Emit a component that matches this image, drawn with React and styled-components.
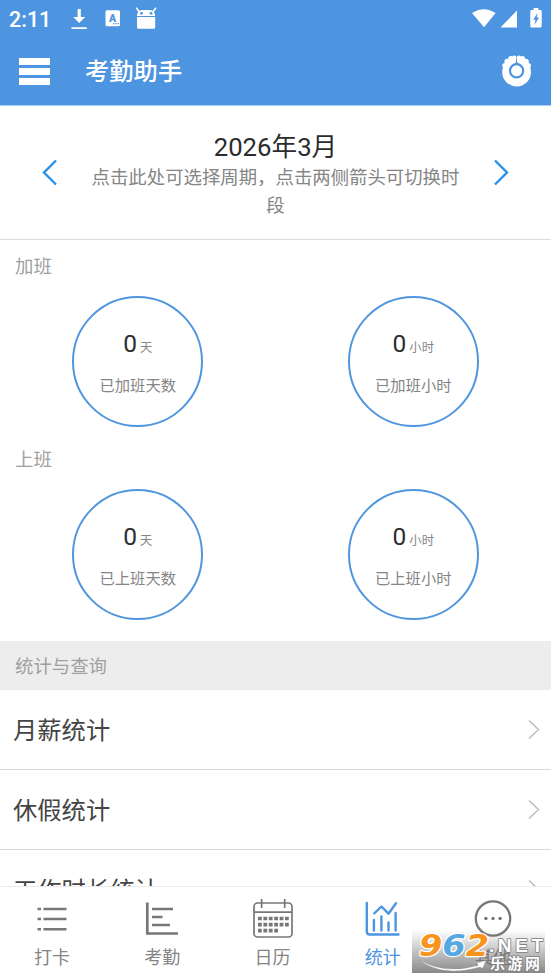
import styled, { createGlobalStyle } from "styled-components"

const GlobalStyle = createGlobalStyle`
    * {
        box-sizing: border-box;
    }
    body {
        margin: 0;
        background: #fff;
        font-family: Roboto, "Noto Sans CJK SC", sans-serif;
    }
`

const Screen = styled.div`
    position: relative;
    display: flex;
    flex-direction: column;
    width: 551px;
    height: 979px;
    overflow: hidden;
    background: #fff;
`

const Header = styled.header`
    flex: none;
    height: 105px;
    background: #4d95e0;
    color: #fff;
`

const StatusBar = styled.div`
    display: flex;
    align-items: center;
    height: 38px;
    padding: 0 9px;
    font-size: 21.5px;
    font-weight: 500;
    svg {
        display: block;
    }
`

const Time = styled.span`
    width: 61px;
    line-height: 38px;
    padding-top: 2px;
`

const StatusIcons = styled.div`
    display: flex;
    align-items: center;
    margin-left: ${(props) => (props.$right ? "auto" : "0")};
`

const TitleBar = styled.div`
    display: flex;
    align-items: center;
    height: 66px;
    padding: 0 18px 0 19px;
`

const MenuButton = styled.button`
    display: flex;
    flex-direction: column;
    gap: 3px;
    width: 31px;
    padding: 0;
    border: 0;
    background: none;
    span {
        height: 7px;
        background: #fff;
    }
`

const Title = styled.h1`
    flex: 1;
    margin: 0 0 0 35px;
    padding-top: 2px;
    font-size: 24.3px;
    line-height: 36px;
    font-weight: 500;
`

const Content = styled.main`
    flex: 1;
    min-height: 0;
    overflow: hidden;
    border-top: 1px solid #a9cdf2;
`

const Period = styled.section`
    display: flex;
    align-items: center;
    justify-content: space-between;
    height: 134px;
    padding: 0 42px;
    border-bottom: 1px solid #dcdcdc;
`

const PeriodText = styled.div`
    width: 369px;
    text-align: center;
    h2 {
        margin: 0;
        padding-top: 5px;
        font-size: 25.7px;
        line-height: 32px;
        font-weight: 400;
        color: #2c2c2c;
    }
    p {
        margin: 0;
        padding-top: 1px;
        font-size: 18.4px;
        line-height: 27.5px;
        color: #858585;
    }
`

const Stats = styled.section`
    height: ${(props) => props.$height}px;
    padding-top: 13px;
`

const Label = styled.h3`
    margin: 0;
    padding-left: 15px;
    font-size: 18.4px;
    line-height: 27px;
    font-weight: 400;
    color: #a0a0a0;
`

const Circles = styled.div`
    display: grid;
    grid-template-columns: 1fr 1fr;
    justify-items: center;
    padding-top: 16px;
`

const Circle = styled.div`
    width: 131px;
    height: 131px;
    padding-top: 28px;
    border: 2px solid #5096de;
    border-radius: 50%;
    text-align: center;
    color: #858585;
    div {
        height: 35px;
        line-height: 35px;
        font-size: 12.3px;
    }
    strong {
        margin-right: 3px;
        font-size: 24.5px;
        font-weight: 400;
        color: #2d2d2d;
    }
    p {
        margin: 13px 0 0;
        font-size: 15.3px;
        line-height: 24px;
        white-space: nowrap;
    }
`

const GroupTitle = styled.div`
    height: 49px;
    background: #ededed;
    padding-top: 12px;
`

const Row = styled.div`
    display: flex;
    align-items: center;
    justify-content: space-between;
    height: 80px;
    padding: 0 11px 0 13px;
    border-bottom: 1px solid #d9d9d9;
    font-size: 24.3px;
    color: #444;
    span {
        padding-bottom: 2px;
    }
`

const TabBar = styled.nav`
    display: flex;
    flex: none;
    height: 93px;
    border-top: 1px solid #ebebeb;
    background: #fff;
`

const Tab = styled.a`
    display: flex;
    flex: 1;
    flex-direction: column;
    align-items: center;
    padding: 11px 6px 0 0;
    color: ${(props) => (props.$active ? "#4d95e0" : "#858585")};
    font-size: 18px;
    line-height: 27px;
    svg {
        margin-bottom: 3px;
    }
`

const Watermark = styled.div`
    position: absolute;
    left: 412px;
    top: 930px;
    width: 133px;
    height: 43px;
    background: linear-gradient(rgba(110, 110, 110, 0), rgba(110, 110, 110, 0.82));
    svg {
        display: block;
    }
`

const Arrow = ({ left, small }) => {
    const width = small ? 12 : 16
    const height = small ? 20 : 27
    return (
        <svg width={width} height={height} viewBox={`0 0 ${width} ${height}`} fill="none">
            <path
                d={small ? "M1 .5l9.5 9L1 18.5" : left ? "M14 1.5l-12 12 12 12" : "M2 1.5l12 12-12 12"}
                stroke={small ? "#bcbcbc" : "#2791e8"}
                strokeWidth={small ? 1.5 : 2.4}
            />
        </svg>
    )
}

const ListIcon = () => (
    <svg width="40" height="43" viewBox="0 0 40 43" stroke="#777" strokeWidth="2.5">
        <path d="M5.5 11h3.5M11.5 11h23M5.5 21h3.5M11.5 21h23M5.5 31.3h3.5M11.5 31.3h23" />
    </svg>
)

const BarsIcon = () => (
    <svg width="40" height="43" viewBox="0 0 40 43" fill="none" stroke="#777" strokeWidth="2.7">
        <path d="M5.3 4.5v31H36M10 11h21M10 19h10.5M10 27h18" />
    </svg>
)

const CalendarIcon = () => (
    <svg width="40" height="43" viewBox="0 0 40 43" fill="none" stroke="#777">
        <rect x="1" y="5" width="38" height="34" rx="3.5" strokeWidth="1.7" />
        <path d="M1 14.2h38M8.6 1v9M31.7 1v9" strokeWidth="1.7" />
        <path d="M5 20.5h32M5 26.7h32M5 32.7h21" strokeWidth="3.7" strokeDasharray="3.8 1.6" />
    </svg>
)

const ChartIcon = () => (
    <svg
        width="40"
        height="43"
        viewBox="0 0 40 43"
        fill="none"
        stroke="currentColor"
        strokeWidth="2.4"
        strokeLinecap="round"
        strokeLinejoin="round"
    >
        <path d="M3.8 5v28.5q0 3 3 3H35.5M10.9 22v10.5M18.4 18.5v14M25.5 24.5v8M32.6 15v17.5" />
        <path d="M11.2 15.5l7.2-7 7.1 7.2L33 5.2" />
    </svg>
)

const MoreIcon = () => (
    <svg width="40" height="43" viewBox="0 0 40 43">
        <circle cx="20" cy="20.5" r="17.2" fill="none" stroke="#777" strokeWidth="2.3" />
        <circle cx="12.9" cy="20.5" r="1.7" fill="#777" />
        <circle cx="20" cy="20.5" r="1.7" fill="#777" />
        <circle cx="27.1" cy="20.5" r="1.7" fill="#777" />
    </svg>
)

const Flower = () => (
    <svg width="32" height="32" viewBox="0 0 32 32">
        <g fill="#fff">
            <circle cx="15.6" cy="17" r="14.4" />
            <circle cx="3.9" cy="10.5" r="2.6" />
            <circle cx="6.2" cy="6.5" r="2.8" />
            <circle cx="9.8" cy="3.8" r="2.7" />
            <circle cx="13.2" cy="2.8" r="2.2" />
            <circle cx="18" cy="2.8" r="2.2" />
            <circle cx="21.4" cy="3.8" r="2.7" />
            <circle cx="25" cy="6.5" r="2.8" />
            <circle cx="27.3" cy="10.5" r="2.6" />
        </g>
        <circle cx="15.6" cy="15.8" r="6.6" fill="#fff" stroke="#4d95e0" strokeWidth="2.2" />
        <path d="M15.3 3h.6l.2 3.5 1.5 3.2h-4l1.5-3.2z" fill="#4d95e0" />
    </svg>
)

const stats = [
    { title: "加班", height: 193 },
    { title: "上班", height: 208 },
]

const tabs = [
    { name: "打卡", Icon: ListIcon },
    { name: "考勤", Icon: BarsIcon },
    { name: "日历", Icon: CalendarIcon },
    { name: "统计", Icon: ChartIcon, active: true },
    { name: "其他", Icon: MoreIcon },
]

const App = () => {
    return (
        <>
            <GlobalStyle />
            <Screen>
                <Header>
                    <StatusBar>
                        <Time>2:11</Time>
                        <StatusIcons>
                            <svg width="88" height="24" viewBox="0 0 88 24" fill="#fff">
                                <path d="M7.6 2h3.2v8h4.4L9.2 16 3.2 10h4.4zM1.5 20.2h15.3v1.9H1.5z" />
                                <rect x="35.5" y="3.3" width="14.5" height="16" rx="1.5" />
                                <text x="42.6" y="14.8" textAnchor="middle" fontSize="10.5" fontWeight="900" fill="#4d95e0">
                                    A
                                </text>
                                <path d="M43 16h1.3v1.3H43zm2.3 0h1.3v1.3h-1.3zm2.3 0h1.3v1.3h-1.3z" fill="#4d95e0" />
                                <path d="M66.2.8l3.2 4.2M86 .8L82.8 5" stroke="#fff" strokeWidth="1.5" />
                                <path d="M67 9c.2-4 2-5.7 5-6h8c3 .3 5 2 5.2 6zM67 10h18.2v10.2a1.5 1.5 0 0 1-1.5 1.5H68.5A1.5 1.5 0 0 1 67 20.2z" />
                                <circle cx="71.5" cy="6.3" r="1.4" fill="#4d95e0" />
                                <circle cx="81" cy="6.3" r="1.4" fill="#4d95e0" />
                            </svg>
                        </StatusIcons>
                        <StatusIcons $right>
                            <svg width="70" height="24" viewBox="0 0 70 24" fill="#fff">
                                <path d="M0 6Q11.8-1.7 23.6 6L12 20.2zM45 3.5v17H28.5zM59.6 3h2V1h4.8v2h2q1.3 0 1.3 1.3v14.9q0 1.3-1.3 1.3h-8.8q-1.3 0-1.3-1.3V4.3Q58.3 3 59.6 3z" />
                                <path d="M65.5 6l-4.3 6.8h2.3l-1 5 4.6-7.3h-2.3z" fill="#4d95e0" />
                            </svg>
                        </StatusIcons>
                    </StatusBar>
                    <TitleBar>
                        <MenuButton>
                            <span />
                            <span />
                            <span />
                        </MenuButton>
                        <Title>考勤助手</Title>
                        <Flower />
                    </TitleBar>
                </Header>

                <Content>
                    <Period>
                        <Arrow left />
                        <PeriodText>
                            <h2>2026年3月</h2>
                            <p>点击此处可选择周期，点击两侧箭头可切换时段</p>
                        </PeriodText>
                        <Arrow />
                    </Period>

                    {stats.map(({ title, height }) => (
                        <Stats key={title} $height={height}>
                            <Label>{title}</Label>
                            <Circles>
                                <Circle>
                                    <div>
                                        <strong>0</strong>天
                                    </div>
                                    <p>已{title}天数</p>
                                </Circle>
                                <Circle>
                                    <div>
                                        <strong>0</strong>小时
                                    </div>
                                    <p>已{title}小时</p>
                                </Circle>
                            </Circles>
                        </Stats>
                    ))}

                    <GroupTitle>
                        <Label>统计与查询</Label>
                    </GroupTitle>
                    {["月薪统计", "休假统计", "工作时长统计"].map((name) => (
                        <Row key={name}>
                            <span>{name}</span>
                            <Arrow small />
                        </Row>
                    ))}
                </Content>

                <TabBar>
                    {tabs.map(({ name, Icon, active }) => (
                        <Tab key={name} $active={active}>
                            <Icon />
                            {name}
                        </Tab>
                    ))}
                </TabBar>

                <Watermark>
                    <svg width="133" height="43" viewBox="0 0 133 43" fontFamily="Liberation Sans" fontWeight="700">
                        <path
                            d="M7 29.5Q32 45 66 35.5l-1-2.8 9-2.2-3.5 8-2.5-1.5Q30 48 7 29.5z"
                            fill="#fff"
                            stroke="#999"
                            strokeWidth=".4"
                        />
                        <g
                            fontSize="30"
                            fontFamily="DejaVu Sans"
                            fontStyle="italic"
                            stroke="#fff"
                            strokeWidth="2.4"
                            strokeLinejoin="round"
                            paintOrder="stroke"
                        >
                            <text x="7" y="25.5" textLength="70" lengthAdjust="spacingAndGlyphs" fill="#f7941e">
                                9<tspan fill="#55a8e2">6</tspan>2
                            </text>
                        </g>
                        <g fill="#fff" stroke="#808080" strokeWidth="1.6" strokeLinejoin="round" paintOrder="stroke">
                            <text x="77" y="21.5" fontSize="19" textLength="54">
                                .NET
                            </text>
                            <text x="78" y="38.5" fontSize="15" fontFamily="Noto Sans CJK SC" textLength="50">
                                乐游网
                            </text>
                        </g>
                    </svg>
                </Watermark>
            </Screen>
        </>
    )
}

export default App
